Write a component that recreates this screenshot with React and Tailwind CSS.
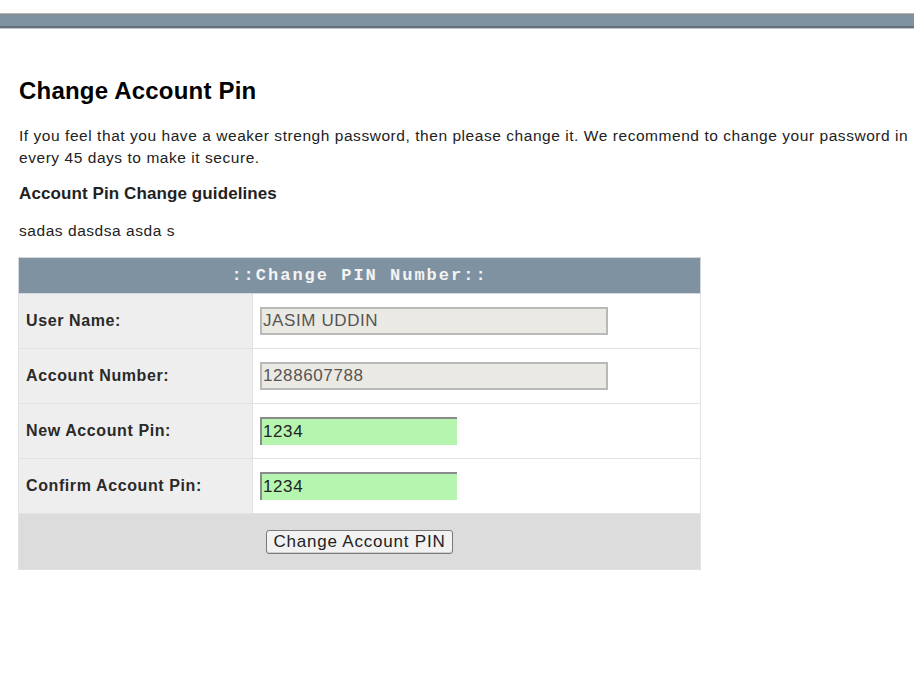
import React from 'react';

export default function App() {
  const rows = [
    { label: 'User Name:', value: 'JASIM UDDIN', readOnly: true },
    { label: 'Account Number:', value: '1288607788', readOnly: true },
    { label: 'New Account Pin:', value: '1234' },
    { label: 'Confirm Account Pin:', value: '1234' },
  ];

  return (
    <div className="min-h-screen bg-white font-['Liberation_Sans',Arial,sans-serif] text-[#222]">
      {/* top bar */}
      <div className="h-[13px]" />
      <div className="border-t border-t-[#b4b4b4] border-b border-b-[#c4c4c4]">
        <div className="h-[14px] bg-[#7f92a2] border-t border-t-[#8a8e92] border-b-2 border-b-[#64717d]" />
      </div>

      <div className="px-[19px] pt-[48px]">
        <h1 className="text-[24px] tracking-[0.2px] font-bold leading-[28px] text-black">Change Account Pin</h1>

        <p className="mt-[20px] text-[15.5px] tracking-[0.55px] leading-[22px] w-[900px]">
          If you feel that you have a weaker strengh password, then please change it. We recommend to change your password in every 45 days to make it secure.
        </p>

        <h2 className="mt-[15px] text-[17px] tracking-[0.1px] font-bold leading-[20px]">Account Pin Change guidelines</h2>

        <p className="mt-[17px] text-[15.5px] tracking-[0.55px] leading-[20px]">sadas dasdsa asda s</p>

        <table className="mt-[16px] -ml-px w-[683px] border-collapse">
          <thead>
            <tr>
              <th
                colSpan={2}
                className="h-[36px] bg-[#7f92a2] border border-[#d4d8dc] text-center font-['Liberation_Mono','Courier_New',monospace] text-[17px] font-bold tracking-[2px] text-[#f4f4f4]"
              >
                ::Change PIN Number::
              </th>
            </tr>
          </thead>
          <tbody>
            {rows.map((r) => (
              <tr key={r.label} className="h-[55px]">
                <td className="w-[234px] bg-[#eeeeee] border border-[#e2e2e2] pl-[7px] text-[16px] tracking-[0.6px] font-bold text-[#2a2a2a]">
                  {r.label}
                </td>
                <td className="bg-white border border-[#e2e2e2] pl-[7px]">
                  <input
                    readOnly
                    value={r.value}
                    className={
                      r.readOnly
                        ? 'block w-[348px] h-[28px] px-[1px] bg-[#ebe9e3] border-2 border-[#b9b9b9] text-[17px] tracking-[0.6px] text-[#555] outline-none'
                        : 'block w-[197px] h-[28px] px-[1px] bg-[#b5f5b0] border-t-2 border-l-2 border-t-[#8a8a8a] border-l-[#8a8a8a] text-[17px] tracking-[0.6px] text-[#222] outline-none'
                    }
                  />
                </td>
              </tr>
            ))}
            <tr className="h-[56px]">
              <td colSpan={2} className="bg-[#dcdcdc] border border-[#e2e2e2] text-center">
                <button className="h-[24px] px-[6px] bg-[#f2f2f2] border border-[#7a7a7a] rounded-[3px] text-[17px] tracking-[0.8px] leading-[20px] text-[#222] shadow-[inset_0_-1px_0_#cfcfcf]">
                  Change Account PIN
                </button>
              </td>
            </tr>
          </tbody>
        </table>
      </div>
    </div>
  );
}
